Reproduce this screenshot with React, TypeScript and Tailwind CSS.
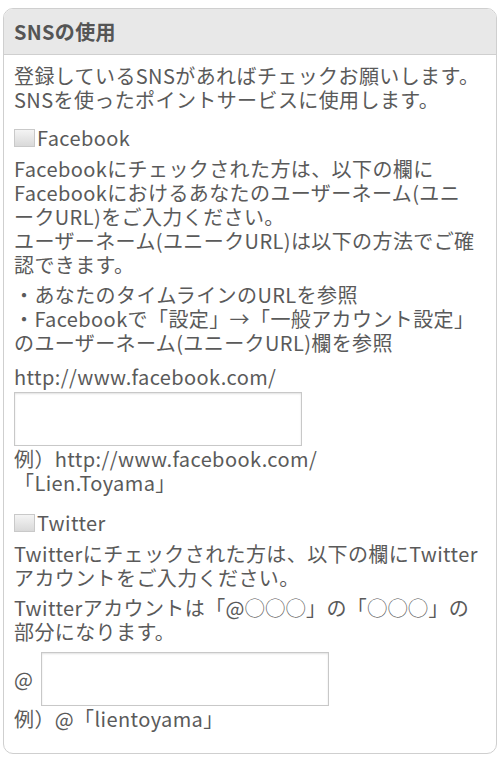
const font = "font-['Noto_Sans_CJK_JP','Noto_Sans',sans-serif]";

function CheckBox() {
  return (
    <span className="inline-block h-[18px] w-[21px] border border-[#c9c9c9] bg-gradient-to-b from-[#f4f4f4] to-[#d9d9d9]" />
  );
}

function TextInput({ width }: { width: string }) {
  return (
    <div
      className={`${width} h-[54px] border border-[#c8c8c8] bg-white shadow-[inset_0_1px_2px_rgba(0,0,0,0.12)]`}
    />
  );
}

export default function App() {
  return (
    <div className={`bg-white px-[3px] pt-[8px] pb-[5px] text-[#5a5a5a] ${font}`}>
      <section className="overflow-hidden rounded-[10px] border border-[#cfcfcf]">
        {/* header */}
        <div className="flex h-[46px] items-center border-b border-[#cfcfcf] bg-[#e8e8e8] px-[10px]">
          <h2 className="text-[20px] font-bold tracking-[0.3px] text-[#555]">SNSの使用</h2>
        </div>

        <div className="px-[10px] pt-[9px] pb-[22px] text-[20px] leading-[24px] tracking-[0.4px]">
          <p>
            登録しているSNSがあればチェックお願いします。
            <br />
            SNSを使ったポイントサービスに使用します。
          </p>

          {/* Facebook */}
          <label className="mt-[12px] flex h-[28px] items-center gap-[2px]">
            <CheckBox />
            <span>Facebook</span>
          </label>
          <p className="mt-[5px]">
            Facebookにチェックされた方は、以下の欄に
            <br />
            Facebookにおけるあなたのユーザーネーム(ユニ
            <br />
            ークURL)をご入力ください。
            <br />
            ユーザーネーム(ユニークURL)は以下の方法でご確
            <br />
            認できます。
          </p>
          <p className="mt-[6px]">
            ・あなたのタイムラインのURLを参照
            <br />
            ・Facebookで「設定」→「一般アカウント設定」
            <br />
            のユーザーネーム(ユニークURL)欄を参照
          </p>
          <p className="mt-[10px]">http://www.facebook.com/</p>
          <div className="mt-[3px]">
            <TextInput width="w-[288px]" />
          </div>
          <p className="mt-px">
            例）http://www.facebook.com/
            <br />
            「Lien.Toyama」
          </p>

          {/* Twitter */}
          <label className="mt-[14px] flex h-[28px] items-center gap-[2px]">
            <CheckBox />
            <span>Twitter</span>
          </label>
          <p className="mt-[5px]">
            Twitterにチェックされた方は、以下の欄にTwitter
            <br />
            アカウントをご入力ください。
          </p>
          <p className="mt-[6px]">
            Twitterアカウントは「@◯◯◯」の「◯◯◯」の
            <br />
            部分になります。
          </p>
          <div className="mt-[8px] flex items-center gap-[8px]">
            <span>@</span>
            <TextInput width="w-[288px]" />
          </div>
          <p className="mt-px">例）@「lientoyama」</p>
        </div>
      </section>
    </div>
  );
}
